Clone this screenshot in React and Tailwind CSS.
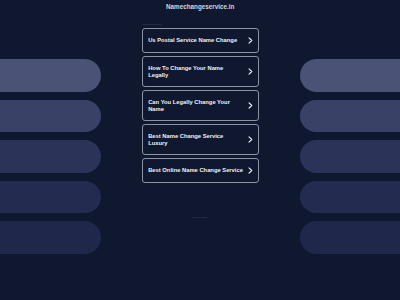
import React from "react";

const bars = ["#4a5275", "#394266", "#2b3458", "#232c50", "#1f284b"];
const cards = [
  ["Us Postal Service Name Change"],
  ["How To Change Your Name", "Legally"],
  ["Can You Legally Change Your", "Name"],
  ["Best Name Change Service", "Luxury"],
  ["Best Online Name Change Service"],
];

function Chevron() {
  return (
    <svg width="5" height="7" viewBox="0 0 5 7" className="shrink-0">
      <polyline points="1,0.8 3.8,3.5 1,6.2" fill="none" stroke="#f3f4f6" strokeWidth="1.1" strokeLinecap="round" strokeLinejoin="round" />
    </svg>
  );
}

export default function App() {
  return (
    <div
      className="w-[400px] h-[300px] bg-[#10182f] flex overflow-hidden"
      style={{ fontFamily: '"Liberation Sans", Arial, sans-serif' }}
    >
      <div className="w-[101px] shrink-0 flex flex-col gap-[8px] pt-[59px]">
        {bars.map((c, i) => (
          <div key={i} className="h-[32.5px] rounded-r-full" style={{ backgroundColor: c }} />
        ))}
      </div>
      <div className="w-[117px] ml-[40.7px] shrink-0 flex flex-col">
        <div className="h-[13px] flex items-center justify-center text-[6.3px] font-bold text-[#d4d7df] whitespace-nowrap pt-[1px]">
          Namechangeservice.in
        </div>
        <div className="h-[15px] flex items-center text-[2.4px] text-[#4b5168] pl-[0.5px] pt-[8px]">
          Related Searches
        </div>
        <div className="flex flex-col gap-[3px]">
          {cards.map((lines, i) => (
            <div
              key={i}
              className={`${lines.length > 1 ? "h-[31px]" : "h-[25px]"} border border-[#8e93a3] rounded-[3px] flex items-center justify-between pl-[5.5px] pr-[5px]`}
            >
              <div className="text-[5.8px] leading-[6.2px] font-bold text-[#f1f2f5] whitespace-nowrap">
                {lines.map((l, j) => (
                  <div key={j}>{l}</div>
                ))}
              </div>
              <Chevron />
            </div>
          ))}
        </div>
        <div className="mt-[33px] text-center text-[2.4px] text-[#4b5168]">Privacy Policy</div>
      </div>
      <div className="flex-1 ml-[41px] flex flex-col gap-[8px] pt-[59px]">
        {bars.map((c, i) => (
          <div key={i} className="h-[32.5px] rounded-l-full" style={{ backgroundColor: c }} />
        ))}
      </div>
    </div>
  );
}
